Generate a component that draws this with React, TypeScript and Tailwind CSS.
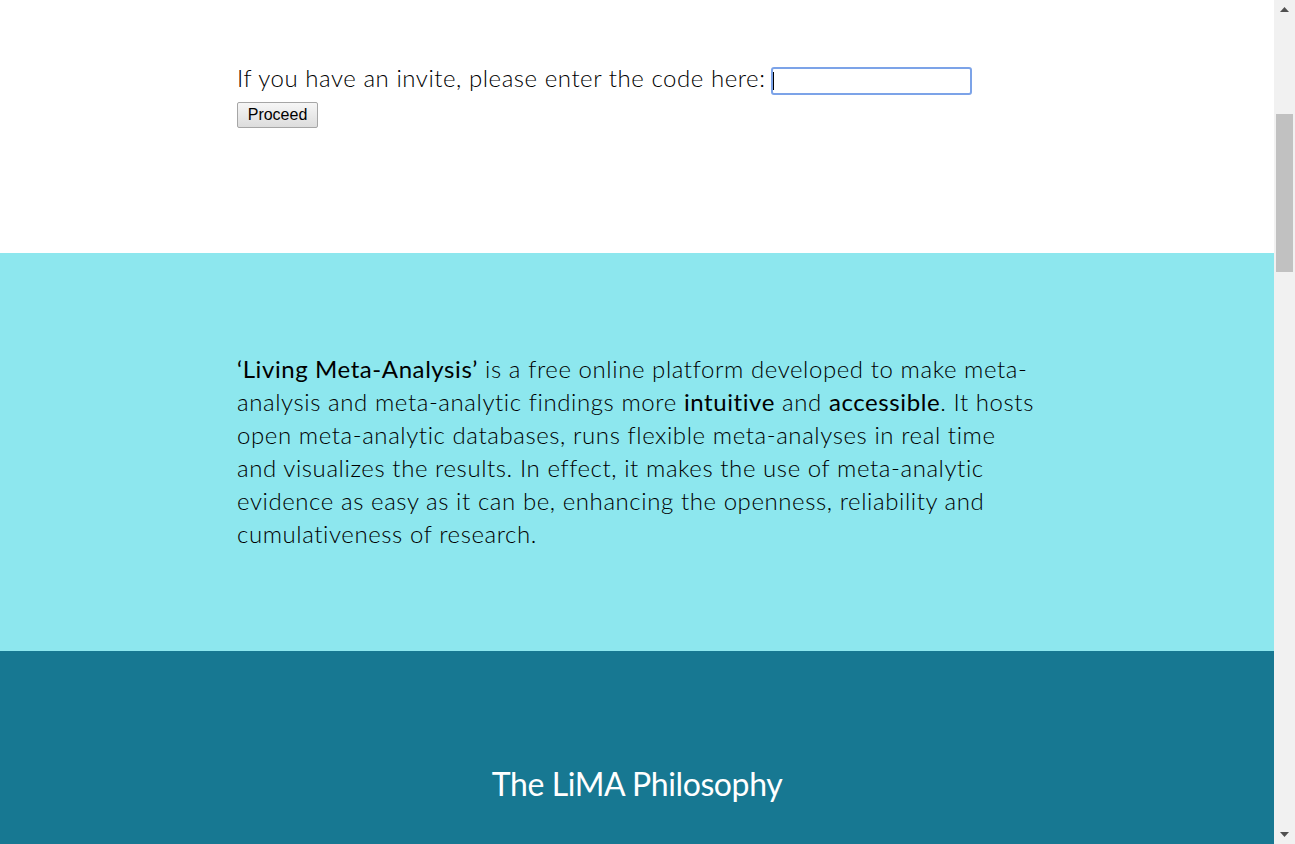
import React from "react";

const Scrollbar: React.FC = () => (
  <div className="w-[21px] shrink-0 h-full bg-[#f1f1f1] flex flex-col items-center">
    <div className="h-[19px] flex items-center justify-center">
      <svg width="9" height="6" viewBox="0 0 9 6">
        <polygon points="4.5,0 9,5 0,5" fill="#505050" />
      </svg>
    </div>
    <div className="h-[95px]" />
    <div className="w-[17px] h-[158px] bg-[#c1c1c1]" />
    <div className="flex-1" />
    <div className="h-[19px] flex items-center justify-center">
      <svg width="9" height="6" viewBox="0 0 9 6">
        <polygon points="0,0 9,0 4.5,5" fill="#505050" />
      </svg>
    </div>
  </div>
);

const App: React.FC = () => {
  return (
    <div className="h-screen w-full flex overflow-hidden bg-white">
      <div className="flex-1 overflow-hidden font-['Lato','Liberation_Sans',sans-serif] font-light text-black">
        {/* invite code */}
        <section className="h-[253px] bg-white pt-[61px]">
          <div className="w-[800px] mx-auto">
            <div className="flex items-start text-[24px] leading-[33px] tracking-[0.55px]">
              <label htmlFor="invite">If you have an invite, please enter the code here:</label>
              <div className="relative ml-[6px] mt-[6px]">
                <input
                  id="invite"
                  className="block w-[201px] h-[28px] border-2 border-[#7ca3e8] rounded-[3px] outline-none px-[2px] text-base"
                />
                <span className="absolute left-[2px] top-[5px] w-px h-[18px] bg-black" />
              </div>
            </div>
            <button className="mt-[7px] h-[26px] w-[81px] text-[16px] leading-none font-['Liberation_Sans',Arial,sans-serif] font-normal tracking-normal text-black bg-gradient-to-b from-[#f6f6f6] to-[#dddddd] border border-[#a6a6a6] rounded-[2px]">
              Proceed
            </button>
          </div>
        </section>

        {/* intro */}
        <section className="h-[398px] bg-[#8de7ee] pt-[99px]">
          <p className="w-[800px] mx-auto text-[24px] leading-[33px] tracking-[0.58px]">
            <span className="font-normal">‘Living Meta-Analysis’</span> is a free online platform developed to make meta-
            <br />
            analysis and meta-analytic findings more <span className="font-normal">intuitive</span> and{" "}
            <span className="font-normal">accessible</span>. It hosts
            <br />
            open meta-analytic databases, runs flexible meta-analyses in real time
            <br />
            and visualizes the results. In effect, it makes the use of meta-analytic
            <br />
            evidence as easy as it can be, enhancing the openness, reliability and
            <br />
            cumulativeness of research.
          </p>
        </section>

        <section className="h-[400px] bg-[#177892] pt-[113px]">
          <h2 className="text-center text-white font-normal text-[32px] leading-[40px] tracking-[-0.4px]">
            The LiMA Philosophy
          </h2>
        </section>
      </div>
      <Scrollbar />
    </div>
  );
};

export default App;
